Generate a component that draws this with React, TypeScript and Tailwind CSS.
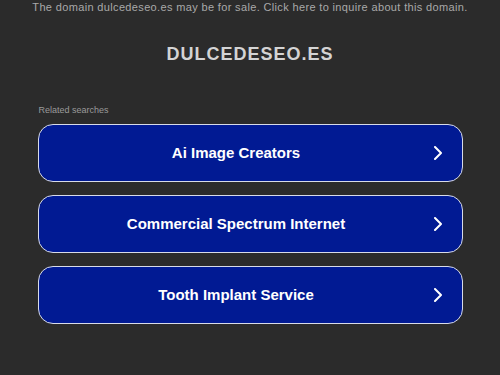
const searches = ["Ai Image Creators", "Commercial Spectrum Internet", "Tooth Implant Service"];

export default function App() {
  return (
    <div className="min-h-[375px] w-full bg-[#2b2b2b] font-['Liberation_Sans',Arial,sans-serif]">
      <p className="text-center text-[11px] leading-[14px] tracking-[0.35px] text-[#a9a9a9]">
        The domain dulcedeseo.es may be for sale. Click here to inquire about this domain.
      </p>
      <h1 className="mt-[30px] text-center text-[18px] font-bold leading-[20px] tracking-[1px] text-[#d4d4d4]">
        DULCEDESEO.ES
      </h1>
      <div className="mx-auto mt-[40px] w-[425px]">
        <p className="pl-[1px] text-[9px] leading-[12px] text-[#9a9a9a]">Related searches</p>
        <div className="mt-[8px] flex flex-col gap-[13px]">
          {searches.map((s) => (
            <div
              key={s}
              className="flex h-[58px] items-center rounded-[15px] border-[1.5px] border-[#d8dbe8] bg-[#011a93]"
            >
              <span className="flex-1 text-center text-[15px] font-bold text-white">{s}</span>
              <svg className="mr-[20px]" width="8" height="14" viewBox="0 0 8 14" fill="none">
                <polyline points="1,1 7,7 1,13" stroke="white" strokeWidth="2" strokeLinecap="round" strokeLinejoin="round" />
              </svg>
            </div>
          ))}
        </div>
      </div>
    </div>
  );
}
